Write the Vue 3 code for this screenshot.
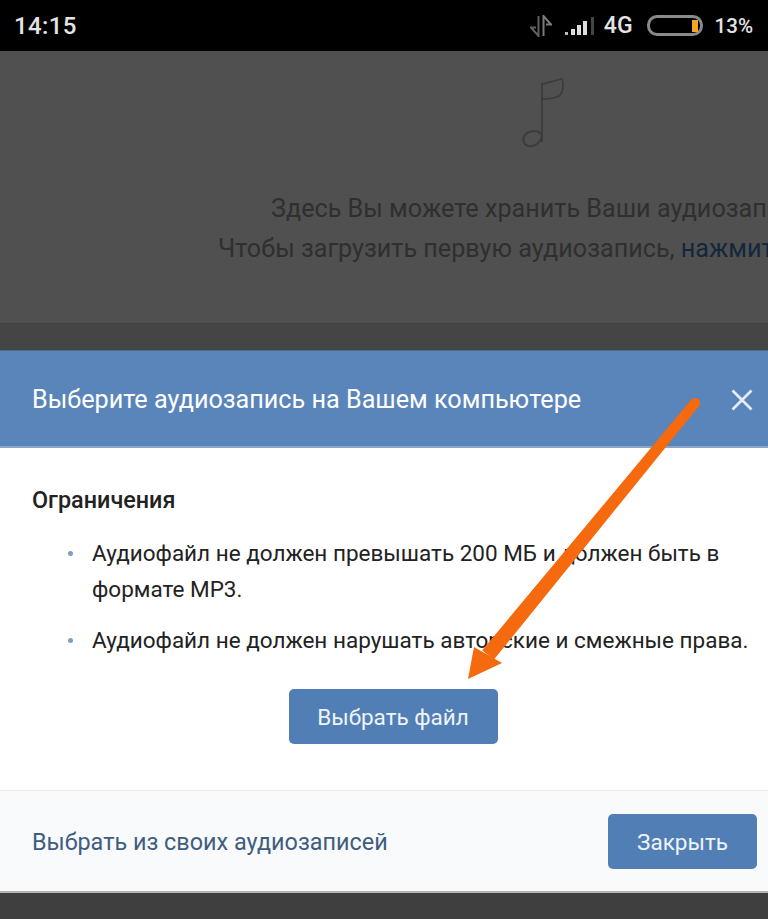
<template>
  <div class="screen">
    <header class="status-bar">
      <span class="clock">14:15</span>
      <div class="status-icons">
        <svg class="data-icon" width="22" height="22" viewBox="0 0 22 22">
          <path d="M8.500 1v20L1 12.500h5" fill="none" stroke="#5f5f5f" stroke-width="2" />
          <path d="M13.500 21V1L21 9.500h-5" fill="none" stroke="#7a7a7a" stroke-width="2" />
        </svg>
        <svg class="signal-icon" width="31" height="20" viewBox="0 0 31 20">
          <rect x="1" y="16" width="3" height="3" fill="#bbb" />
          <rect x="7" y="13" width="4" height="6" fill="#ddd" />
          <rect x="13" y="9" width="4" height="10" fill="#ddd" />
          <rect x="19" y="5" width="4" height="14" fill="#ddd" />
          <rect x="27" y="1" width="3" height="18" fill="#444" />
        </svg>
        <span class="net">4G</span>
        <div class="battery"><span class="battery-level"></span></div>
        <span class="percent">13%</span>
      </div>
    </header>

    <section class="backdrop">
      <svg class="note" width="48" height="74" viewBox="0 0 48 74" fill="none">
        <path d="M24 66V8c7-2 13-3 19-5 2 0 2 3 2 6 0 4-1 9-4 11-5 3-11 3-17 3" stroke="#3c3c3c" stroke-width="1.800" />
        <path d="M24 60c-1 6-7 11-13 10-6-1-7-7-4-11 3-4 9-5 14-3 2 1 3 2 3 4z" stroke="#3c3c3c" stroke-width="2" />
      </svg>
      <p class="hint hint-first">Здесь Вы можете хранить Ваши аудиозаписи.</p>
      <p class="hint hint-second">Чтобы загрузить первую аудиозапись, <a class="hint-link">нажмите здесь</a>.</p>
    </section>
    <div class="backdrop-strip"></div>

    <main class="modal">
      <div class="modal-head">
        <h1 class="modal-title">Выберите аудиозапись на Вашем компьютере</h1>
        <svg class="close" width="22" height="22" viewBox="0 0 22 22">
          <path d="M1.500 1.500l19 19M20.500 1.500l-19 19" stroke="#e6edf5" stroke-width="2.600" fill="none" />
        </svg>
      </div>
      <div class="modal-body">
        <h2 class="limits">Ограничения</h2>
        <ul class="rules">
          <li v-for="rule in rules" :key="rule">{{ rule }}</li>
        </ul>
        <div class="pick-row">
          <button class="btn btn-pick" type="button">Выбрать файл</button>
        </div>
      </div>
      <div class="modal-foot">
        <a class="own-audio">Выбрать из своих аудиозаписей</a>
        <button class="btn btn-close" type="button">Закрыть</button>
      </div>
    </main>
    <div class="bottom-strip"></div>

    <svg class="arrow" width="768" height="919" viewBox="0 0 768 919">
      <circle cx="695" cy="403" r="5" fill="#f5690f" />
      <path d="M698.900 406.200L493.800 659.800L482.200 650.200L691.100 399.800Z" fill="#f5690f" />
      <path d="M468 679L474 647L502 663Z" fill="#f5690f" />
    </svg>
  </div>
</template>

<script setup>
const rules = [
  'Аудиофайл не должен превышать 200 МБ и должен быть в формате MP3.',
  'Аудиофайл не должен нарушать авторские и смежные права.'
]
</script>

<style>
html,
body {
  margin: 0;
  background: #3f3f3f;
}
</style>

<style scoped>
.screen {
  position: relative;
  width: 768px;
  height: 919px;
  overflow: hidden;
  display: flex;
  flex-direction: column;
  font-family: Roboto, "Liberation Sans", sans-serif;
  background: #3f3f3f;
}

.status-bar {
  height: 51px;
  flex: none;
  background: #000;
  color: #e4e4e4;
  display: flex;
  align-items: center;
  justify-content: space-between;
  padding: 0 15px 0 14px;
  box-sizing: border-box;
}

.clock {
  font-size: 24px;
  font-weight: 500;
  letter-spacing: 0.4px;
}

.status-icons {
  display: flex;
  align-items: center;
}

.data-icon {
  margin-right: 12px;
}

.signal-icon {
  margin-right: 9px;
}

.net {
  font-size: 23px;
  font-weight: 500;
}

.percent {
  font-size: 20.500px;
  font-weight: 500;
}

.battery {
  width: 56px;
  height: 21px;
  margin: 0 12px 0 14px;
  box-sizing: border-box;
  border: 3px solid #8a8a8a;
  border-radius: 10px;
  display: flex;
  justify-content: flex-end;
  align-items: center;
  padding-right: 2px;
}

.battery-level {
  width: 6px;
  height: 12px;
  background: #f5a623;
}

.backdrop {
  height: 273px;
  flex: none;
  box-sizing: border-box;
  background: #505050;
  border-bottom: 1px solid #414141;
  padding-top: 25px;
  white-space: nowrap;
  color: #2f2f2f;
  font-size: 25.200px;
}

.note {
  display: block;
  margin-left: 518px;
}

.hint {
  margin: 0;
  line-height: 40px;
}

.hint-first {
  margin-top: 39px;
  padding-left: 271px;
}

.hint-second {
  padding-left: 218px;
}

.hint-link {
  color: #14273d;
}

.backdrop-strip {
  height: 26px;
  flex: none;
  background: #454545;
}

.modal {
  height: 543px;
  flex: none;
  display: flex;
  flex-direction: column;
  background: #fff;
  border-top: 1px solid #4d6a91;
  box-sizing: border-box;
}

.modal-head {
  height: 97px;
  flex: none;
  box-sizing: border-box;
  background: #5a85bb;
  border-bottom: 2px solid #8ba6c9;
  display: flex;
  align-items: center;
  justify-content: space-between;
  padding: 2px 15px 0 32px;
}

.modal-title {
  margin: 0;
  font-size: 25.200px;
  font-weight: 400;
  color: #fff;
}

.modal-body {
  flex: 1;
  box-sizing: border-box;
  padding: 38px 14px 0 32px;
  color: #222;
}

.limits {
  margin: 0;
  font-size: 23.400px;
  font-weight: 500;
  line-height: 28px;
}

.rules {
  list-style: none;
  margin: 21px 0 0;
  padding: 0 0 0 60px;
  font-size: 22.500px;
  line-height: 36px;
}

.rules li {
  position: relative;
  margin-bottom: 15px;
}

.rules li::before {
  content: "";
  position: absolute;
  left: -24px;
  top: 16px;
  width: 5px;
  height: 5px;
  border-radius: 50%;
  background: #7d9ec7;
}

.pick-row {
  display: flex;
  justify-content: center;
  margin-top: 31px;
}

.btn {
  border: 0;
  border-radius: 5px;
  background: #517fb5;
  color: #eef3f8;
  font-family: inherit;
  font-size: 22.500px;
  padding: 0;
}

.btn-pick {
  width: 209px;
  height: 55px;
}

.modal-foot {
  height: 103px;
  flex: none;
  box-sizing: border-box;
  background: #f9fafb;
  border-top: 1px solid #e7e9ec;
  border-bottom: 2px solid #b5b5b5;
  display: flex;
  align-items: center;
  justify-content: space-between;
  padding: 1px 11px 0 32px;
}

.own-audio {
  font-size: 23.400px;
  color: #3f5d80;
}

.btn-close {
  width: 149px;
  height: 55px;
}

.bottom-strip {
  flex: 1;
  background: #3f3f3f;
}

.arrow {
  position: absolute;
  left: 0;
  top: 0;
  pointer-events: none;
}
</style>
